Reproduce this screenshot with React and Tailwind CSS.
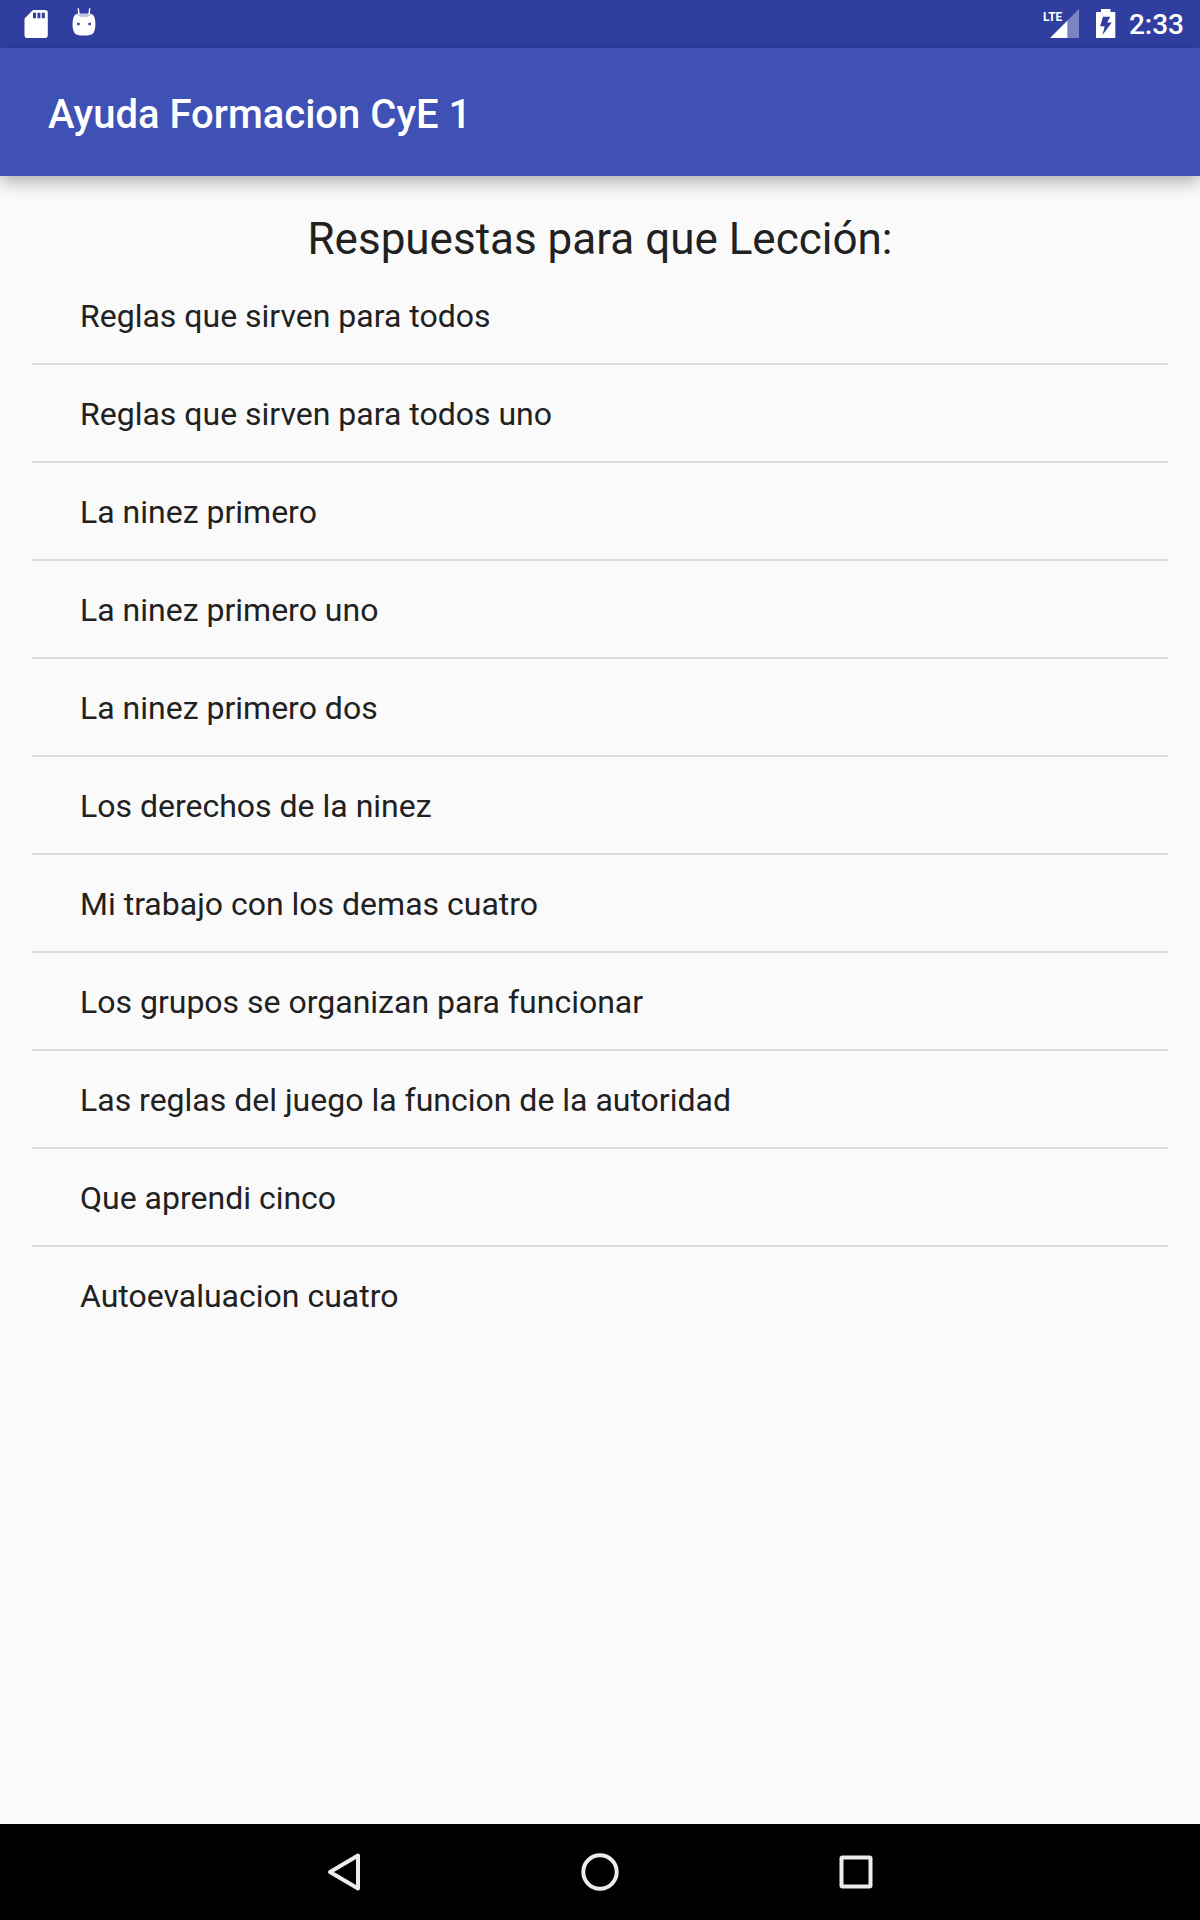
const lessons = [
  'Reglas que sirven para todos',
  'Reglas que sirven para todos uno',
  'La ninez primero',
  'La ninez primero uno',
  'La ninez primero dos',
  'Los derechos de la ninez',
  'Mi trabajo con los demas cuatro',
  'Los grupos se organizan para funcionar',
  'Las reglas del juego la funcion de la autoridad',
  'Que aprendi cinco',
  'Autoevaluacion cuatro',
];

function StatusBar() {
  return (
    <div className="flex h-12 items-center justify-between bg-[#303f9f] px-4 text-white">
      <div className="flex items-center gap-4">
        <svg width="40" height="48" viewBox="0 0 40 48" fill="currentColor" aria-hidden="true">
          <path
            fillRule="evenodd"
            d="M17 10H29a2.8 2.8 0 0 1 2.8 2.8V35.2a2.8 2.8 0 0 1-2.8 2.8H11.3a2.8 2.8 0 0 1-2.8-2.8V18.5ZM17 12.700v5.600h3v-5.600ZM21.400 12.700v5.600h3v-5.600ZM25.800 12.700v5.600h3v-5.600Z"
          />
        </svg>
        <svg width="24" height="48" viewBox="0 0 24 48" fill="currentColor" aria-hidden="true">
          <path d="M6.300 9 7 14M17.700 9 17 14" stroke="currentColor" strokeWidth="1.500" strokeLinecap="round" />
          <path d="M5 13.500H19L18 17H6Z" opacity="0.7" />
          <path
            fillRule="evenodd"
            d="M2.500 15.500C3.500 14.500 5 13.700 5.300 13.700C6 16.500 8.500 17 12 17S18 16.500 18.700 13.700C19.500 13.900 20.800 14.600 21.500 15.500C24 19 24 28 22 32C21 34.500 18 35.600 12 35.600S3 34.500 2 32C0 28 0 19 2.500 15.500ZM5.200 22.800v2.400h2.400v-2.400ZM16.400 22.800v2.400h2.400v-2.400Z"
          />
        </svg>
      </div>
      <div className="flex items-center gap-3">
        <svg width="40" height="48" viewBox="0 0 40 48" fill="currentColor" aria-label="LTE">
          <text x="3" y="21" className="font-[Roboto,sans-serif] text-[12px] font-bold">LTE</text>
          <path d="M10 38 27.500 20.500V38Z" />
          <path d="M27.500 20.500 39 9V38H27.500Z" opacity="0.36" />
        </svg>
        <svg width="25" height="48" viewBox="0 0 25 48" fill="currentColor" aria-hidden="true">
          <path
            fillRule="evenodd"
            d="M9 9H18.500V12H22.500a0.800 0.800 0 0 1 .8.800V38H4V12.800a0.800 0.800 0 0 1 .8-.800H9ZM11 16.800 8.200 26.200H12.700L10.500 35 19.800 22.600H15.200L18.200 16.800Z"
          />
        </svg>
        <span className="pt-0.5 text-[28px] leading-8 font-medium">2:33</span>
      </div>
    </div>
  );
}

function LessonItem({ name }) {
  return (
    <li>
      <button type="button" className="flex min-h-24 w-full items-center px-12 pt-0.5 text-left text-[32px] leading-10">
        {name}
      </button>
    </li>
  );
}

function NavButton({ label, children }) {
  return (
    <button type="button" aria-label={label} className="flex h-24 w-64 items-center justify-center">
      <svg width="48" height="48" viewBox="0 0 48 48" fill="none" stroke="#ececec" strokeWidth="4" strokeLinejoin="round" aria-hidden="true">
        {children}
      </svg>
    </button>
  );
}

export default function App() {
  return (
    <div className="flex min-h-screen flex-col bg-[#fafafa] font-[Roboto,sans-serif] text-[#212121]">
      <StatusBar />

      <header className="flex h-32 items-center bg-[#3f51b5] px-12 pt-1.5 text-white shadow-[0_6px_16px_rgba(0,0,0,0.3)]">
        <h1 className="text-[40px] leading-12 font-medium">Ayuda Formacion CyE 1</h1>
      </header>

      <main className="flex-1 px-8 pt-9">
        <h2 className="text-center text-[44px] leading-[55px]">Respuestas para que Lección:</h2>
        <ul className="divide-y-2 divide-[#dcdcdc]">
          {lessons.map((name) => (
            <LessonItem key={name} name={name} />
          ))}
        </ul>
      </main>

      <nav className="flex justify-center bg-black">
        <NavButton label="Atrás">
          <path d="M10 24 38 7.500V40.500Z" />
        </NavButton>
        <NavButton label="Inicio">
          <circle cx="24" cy="24" r="16.700" />
        </NavButton>
        <NavButton label="Recientes">
          <rect x="9.500" y="9.500" width="29" height="29" rx="1" />
        </NavButton>
      </nav>
    </div>
  );
}
